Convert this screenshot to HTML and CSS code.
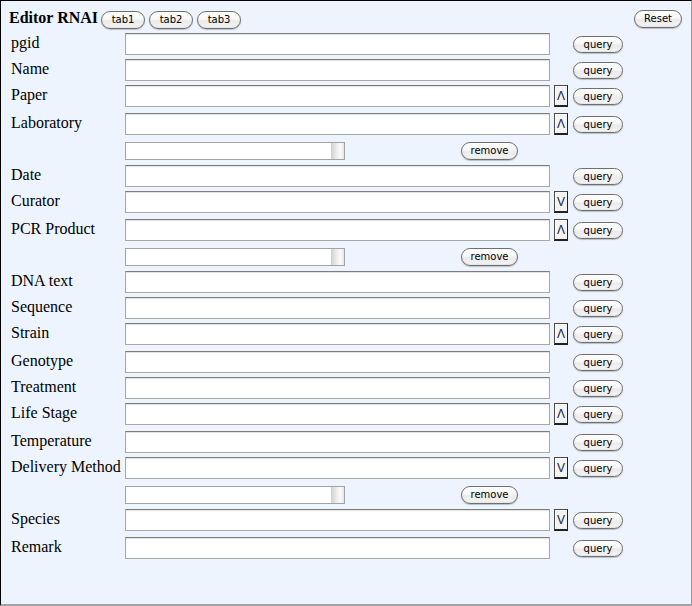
FILE: index.html
```
<!DOCTYPE html>
<html>
<head>
<meta charset="utf-8">
<title>Editor RNAI</title>
<link rel="stylesheet" href="styles.css">
</head>
<body>
<div class="frame">
  <div class="header">
    <span class="title">Editor RNAI</span>
    <div class="tabs">
      <button class="btn tab">tab1</button>
      <button class="btn tab">tab2</button>
      <button class="btn tab">tab3</button>
    </div>
    <button class="btn reset">Reset</button>
  </div>
  <div class="form">
    <div class="row"><span class="lbl">pgid</span><input class="field" type="text"><span class="acell"></span><button class="btn query">query</button></div>
    <div class="row"><span class="lbl">Name</span><input class="field" type="text"><span class="acell"></span><button class="btn query">query</button></div>
    <div class="row tall"><span class="lbl">Paper</span><input class="field" type="text"><span class="acell"><span class="arrow">Λ</span></span><button class="btn query">query</button></div>
    <div class="row tall"><span class="lbl">Laboratory</span><input class="field" type="text"><span class="acell"><span class="arrow">Λ</span></span><button class="btn query">query</button></div>
    <div class="row sub"><span class="lbl"></span><div class="subwrap"><div class="list"><span class="grip"></span></div><button class="btn remove">remove</button></div></div>
    <div class="row"><span class="lbl">Date</span><input class="field" type="text"><span class="acell"></span><button class="btn query">query</button></div>
    <div class="row tall"><span class="lbl">Curator</span><input class="field" type="text"><span class="acell"><span class="arrow">V</span></span><button class="btn query">query</button></div>
    <div class="row tall"><span class="lbl">PCR Product</span><input class="field" type="text"><span class="acell"><span class="arrow">Λ</span></span><button class="btn query">query</button></div>
    <div class="row sub"><span class="lbl"></span><div class="subwrap"><div class="list"><span class="grip"></span></div><button class="btn remove">remove</button></div></div>
    <div class="row"><span class="lbl">DNA text</span><input class="field" type="text"><span class="acell"></span><button class="btn query">query</button></div>
    <div class="row"><span class="lbl">Sequence</span><input class="field" type="text"><span class="acell"></span><button class="btn query">query</button></div>
    <div class="row tall"><span class="lbl">Strain</span><input class="field" type="text"><span class="acell"><span class="arrow">Λ</span></span><button class="btn query">query</button></div>
    <div class="row"><span class="lbl">Genotype</span><input class="field" type="text"><span class="acell"></span><button class="btn query">query</button></div>
    <div class="row"><span class="lbl">Treatment</span><input class="field" type="text"><span class="acell"></span><button class="btn query">query</button></div>
    <div class="row tall"><span class="lbl">Life Stage</span><input class="field" type="text"><span class="acell"><span class="arrow">Λ</span></span><button class="btn query">query</button></div>
    <div class="row"><span class="lbl">Temperature</span><input class="field" type="text"><span class="acell"></span><button class="btn query">query</button></div>
    <div class="row tall"><span class="lbl">Delivery Method</span><input class="field" type="text"><span class="acell"><span class="arrow">V</span></span><button class="btn query">query</button></div>
    <div class="row sub"><span class="lbl"></span><div class="subwrap"><div class="list"><span class="grip"></span></div><button class="btn remove">remove</button></div></div>
    <div class="row tall"><span class="lbl">Species</span><input class="field" type="text"><span class="acell"><span class="arrow">V</span></span><button class="btn query">query</button></div>
    <div class="row"><span class="lbl">Remark</span><input class="field" type="text"><span class="acell"></span><button class="btn query">query</button></div>
  </div>
</div>
</body>
</html>
```

FILE: styles.css
```
html, body {
  margin: 0;
  padding: 0;
  background: #edf4fe;
}
.frame {
  box-sizing: border-box;
  width: 692px;
  height: 606px;
  border-style: solid;
  border-width: 1px 1px 2px 1px;
  border-color: #000 #9a9a9a #a4a4a4 #000;
  background: #edf4fe;
  padding: 0 9px 0 8px;
  font-family: "Liberation Serif", "Times New Roman", serif;
  color: #000;
}
.header {
  display: flex;
  align-items: flex-start;
  height: 30px;
  box-sizing: border-box;
  padding-top: 8px;
}
.title {
  font-weight: bold;
  font-size: 16px;
  line-height: 18px;
}
.tabs {
  display: flex;
  gap: 4px;
  margin-left: 3px;
  margin-top: 2px;
}
.btn {
  box-sizing: border-box;
  margin: 0;
  padding: 0;
  font-family: "DejaVu Sans", "Liberation Sans", sans-serif;
  font-size: 10px;
  color: #000;
  border: 1px solid #6f6f6f;
  border-radius: 9px;
  background: linear-gradient(to bottom, #ffffff 0%, #f7f7f7 45%, #ebebeb 55%, #f3f3f3 100%);
  box-shadow: 0 1px 1px rgba(0, 0, 0, 0.22), inset 0 -1px 1px rgba(0, 0, 0, 0.06);
  text-align: center;
  line-height: 14px;
}
.tab {
  width: 44px;
  height: 18px;
}
.reset {
  margin-left: auto;
  margin-top: 1px;
  width: 48px;
  height: 18px;
}
.form {
  display: flex;
  flex-direction: column;
}
.row {
  display: grid;
  grid-template-columns: 116px 425px 23px 50px;
  align-items: center;
  height: 26px;
  box-sizing: border-box;
}
.row.tall {
  height: 28px;
  padding-bottom: 2px;
}
.row.sub {
  height: 24px;
}
.lbl {
  font-size: 16px;
  line-height: 18px;
  padding-left: 2px;
  padding-bottom: 2px;
  white-space: nowrap;
}
.field {
  box-sizing: border-box;
  width: 425px;
  height: 22px;
  margin: 0;
  padding: 0 3px;
  border: 1px solid #a8a8a8;
  border-top-color: #7c7c7c;
  background: #fff;
  box-shadow: inset 0 1px 1px rgba(0, 0, 0, 0.12);
  outline: none;
  font-family: "DejaVu Sans", sans-serif;
  font-size: 12px;
}
.acell {
  display: flex;
  height: 22px;
  padding-left: 4px;
}
.arrow {
  box-sizing: border-box;
  width: 14px;
  height: 22px;
  border: 1px solid #4a4a4a;
  border-right-color: #222;
  border-bottom: 2px solid #222;
  background: #f3f3f3;
  box-shadow: inset 1px 1px 0 #fff;
  font-family: "Liberation Sans", sans-serif;
  font-size: 12px;
  line-height: 12px;
  color: #14204a;
  display: flex;
  align-items: flex-end;
  justify-content: center;
  padding-bottom: 3px;
}
.query {
  width: 50px;
  height: 17px;
  line-height: 13px;
}
.subwrap {
  grid-column: 2 / 5;
  display: flex;
  align-items: center;
}
.list {
  box-sizing: border-box;
  width: 220px;
  height: 18px;
  border: 1px solid #a3a3a3;
  background: #fff;
  display: flex;
  justify-content: flex-end;
}
.grip {
  width: 12px;
  height: 100%;
  background: linear-gradient(to right, #d6d6d6 0%, #efefef 45%, #fafafa 70%, #e6e6e6 100%);
  border-left: 1px solid #cfcfcf;
}
.remove {
  width: 57px;
  height: 18px;
  margin-left: 116px;
}
```
